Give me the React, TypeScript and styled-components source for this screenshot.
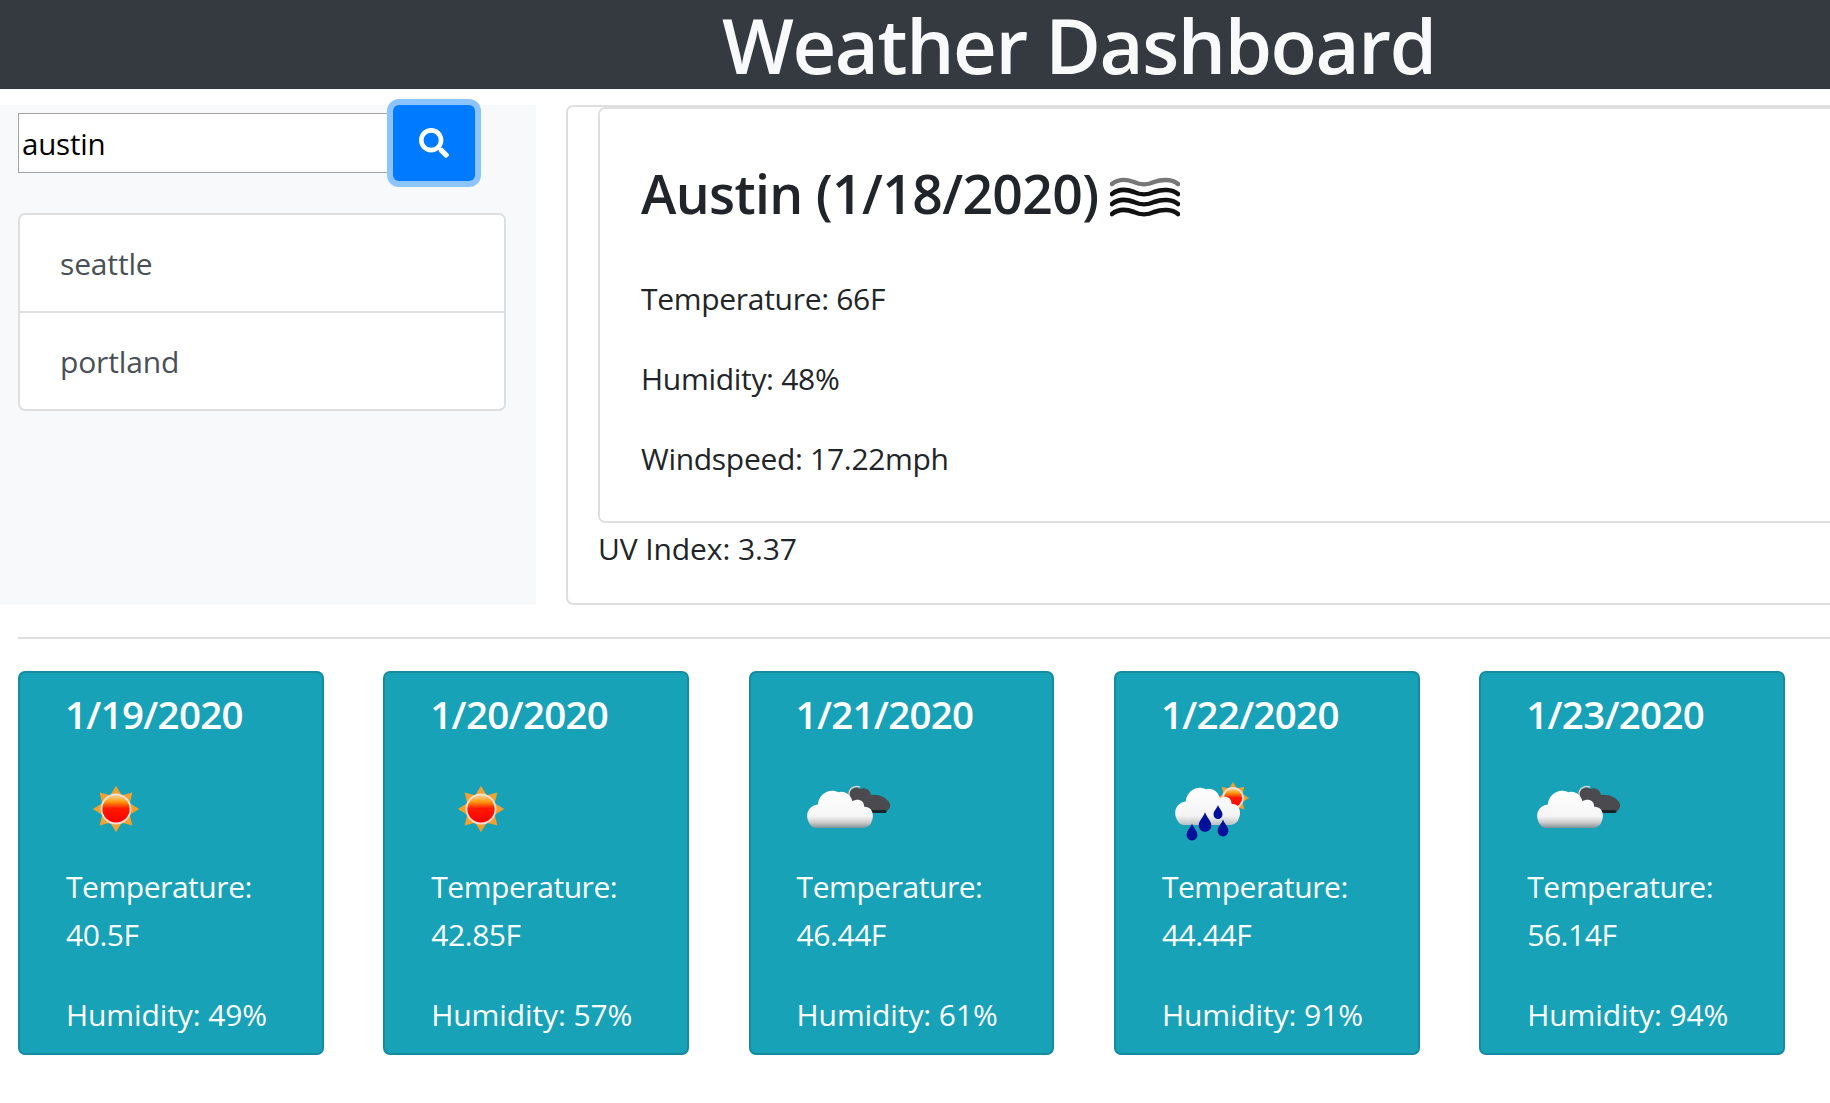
import React from "react";
import styled, { createGlobalStyle } from "styled-components";
import { FaSearch } from "react-icons/fa";

const Global = createGlobalStyle`
  html, body { margin: 0; padding: 0; background: #fff; overflow: hidden; }
  body { font-family: "Open Sans", "Noto Sans", "Liberation Sans", sans-serif; color: #212529; width: 1830px; height: 1103px; }
  * { box-sizing: border-box; }
`;

const Header = styled.header`
  height: 89px; background: #343a40; padding-left: 722px;
`;
const Title = styled.h1`
  margin: 0; font-size: 76px; line-height: 89px; font-weight: 600; color: #f8f9fa; letter-spacing: -1.4px; white-space: nowrap;
`;
const TopRow = styled.div`
  display: flex; margin-top: 16px; height: 500px;
`;
const Sidebar = styled.aside`
  width: 536px; flex: none; background: #f8f9fa; padding-left: 18px;
`;
const SearchRow = styled.form`
  display: flex; align-items: center; height: 76px;
`;
const SearchInput = styled.input`
  width: 375px; height: 60px; border: 1px solid #a3a3a3; background: #fff; padding: 1px 3px 0; margin: 0;
  font: 400 29.5px "Open Sans", sans-serif; color: #000; letter-spacing: -0.2px; outline: none; border-radius: 0;
`;
const SearchButton = styled.button`
  width: 82px; height: 76px; border: none; border-radius: 6px; background: #007bff; color: #fff; padding: 0;
  display: flex; align-items: center; justify-content: center; box-shadow: 0 0 0 6px #8cc4ff; font-size: 30px;
`;
const CityList = styled.ul`
  list-style: none; margin: 32px 0 0; padding: 0; width: 488px; border: 2px solid #dfdfdf; border-radius: 7px; background: #fff;
`;
const CityItem = styled.li`
  height: 96px; padding-left: 40px; display: flex; align-items: center; font-size: 30px; color: #495057; letter-spacing: -0.15px;
  & + & { border-top: 2px solid #dfdfdf; height: 98px; }
`;
const Main = styled.main`
  margin-left: 30px; flex: none; width: 1400px; height: 500px; border: 2px solid #dfdfdf; border-radius: 7px; padding-left: 30px;
`;
const CurrentCard = styled.section`
  height: 416px; border: 2px solid #dfdfdf; border-radius: 7px; padding: 54px 0 0 41px; display: flex; flex-direction: column; gap: 40px;
`;
const CityHeading = styled.h2`
  margin: 0 0 16px; height: 60px; display: flex; align-items: center; gap: 12px; font-size: 53.5px; font-weight: 600; letter-spacing: -0.65px; color: #212529; white-space: nowrap;
`;
const Detail = styled.p`
  margin: 0; height: 40px; line-height: 40px; font-size: 30px; letter-spacing: -0.3px;
`;
const UvLine = styled.div`
  height: 52px; line-height: 52px; font-size: 30px; letter-spacing: -0.1px;
`;
const Rule = styled.hr`
  margin: 32px 0 0 18px; border: none; height: 2px; background: #dedede;
`;
const Forecast = styled.div`
  display: flex; gap: 59.5px; margin: 32px 0 0 18px;
`;
const DayCard = styled.article`
  width: 305.8px; height: 384px; background: #17a2b8; border: 2px solid #148b9e; border-radius: 7px; color: #fff; padding: 16px 0 0 46px; flex: none;
`;
const DayDate = styled.h5`
  margin: 0 0 0 -1px; height: 50px; line-height: 50px; font-size: 38.5px; font-weight: 600; letter-spacing: -0.7px;
`;
const IconSlot = styled.div`
  width: 100px; height: 100px; margin-top: 19px;
`;
const Temp = styled.p`
  margin: 5px 0 0; font-size: 30px; line-height: 48px; letter-spacing: -0.45px; width: 240px;
`;
const Hum = styled.p`
  margin: 32px 0 0; font-size: 30px; line-height: 48px; letter-spacing: -0.1px; white-space: nowrap;
`;
const SoftSvg = styled.svg`
  display: block; filter: blur(0.7px);
`;
const WaveSvg = styled.svg`
  flex: none; margin-top: 7px; filter: blur(0.7px);
`;

const wave = (y: number) =>
  `M2 ${y + 2} C8 ${y - 3} 16 ${y - 3} 24 ${y} C30 ${y + 3} 38 ${y + 3} 44 ${y} C52 ${y - 3} 62 ${y - 3} 68 ${y + 2}`;

const Waves = () => (
  <WaveSvg width="70" height="40" viewBox="0 0 70 40" fill="none" strokeLinecap="round">
    <path d={wave(5)} stroke="#777" strokeWidth="4.4" />
    <path d={wave(15)} stroke="#111" strokeWidth="4.6" />
    <path d={wave(25)} stroke="#111" strokeWidth="4.6" />
    <path d={wave(35)} stroke="#111" strokeWidth="4.6" />
  </WaveSvg>
);

const SunGlyph = ({ id, cx, cy, r }: { id: string; cx: number; cy: number; r: number }) => {
  const pts: string[] = [];
  for (let i = 0; i < 16; i++) {
    const a = (Math.PI * 2 * i) / 16 - Math.PI / 2;
    const rad = i % 2 === 0 ? r * 1.6 : r * 1.02;
    pts.push(`${(cx + rad * Math.cos(a)).toFixed(1)},${(cy + rad * Math.sin(a)).toFixed(1)}`);
  }
  return (
    <>
      <defs>
        <linearGradient id={id} x1="0" y1="0" x2="0" y2="1">
          <stop offset="0" stopColor="#ffd9a0" />
          <stop offset="0.25" stopColor="#ff9a10" />
          <stop offset="0.48" stopColor="#ff1a00" />
          <stop offset="1" stopColor="#f80000" />
        </linearGradient>
      </defs>
      <polygon points={pts.join(" ")} fill="#f2a12e" />
      <circle cx={cx} cy={cy} r={r} fill={`url(#${id})`} stroke="#f9dfd2" strokeWidth="1.8" />
    </>
  );
};

const Sun = ({ id }: { id: string }) => (
  <SoftSvg width="100" height="100" viewBox="0 0 100 100">
    <SunGlyph id={id} cx={50} cy={51} r={14.5} />
  </SoftSvg>
);

const CLOUD = "M8 58 C2 50 6 41 15 40 C16 30 26 25 34 29 C39 27 46 31 47 37 C52 34 58 36 58 42 C66 42 68 50 64 57 C62 60 58 61 54 61 L14 61 C12 61 9 60 8 58 Z";

const Cloud = ({ id }: { id: string }) => (
  <SoftSvg width="100" height="100" viewBox="0 0 100 100">
    <defs>
      <linearGradient id={id} x1="0" y1="0" x2="0" y2="1">
        <stop offset="0" stopColor="#ffffff" />
        <stop offset="0.68" stopColor="#f6f6f6" />
        <stop offset="0.86" stopColor="#c9c9c9" />
        <stop offset="1" stopColor="#7d8f96" />
      </linearGradient>
    </defs>
    <path d="M51 37 C51 30 58 27 63 31 C68 29 73 32 74 37 C81 36 90 39 93 46 C94 52 88 55 84 55 L62 55 Z" fill="#4b4b4f" />
    <path d="M52 38 C51 31 57 27 63 29" fill="none" stroke="#c9d3d6" strokeWidth="1.6" />
    <path d="M68 53.5 L88 53.5" stroke="#16242b" strokeWidth="3" strokeLinecap="round" />
    <path d={CLOUD} fill={`url(#${id})`} transform="translate(4.6 1.8) scale(1.08 1.12)" />
  </SoftSvg>
);

const DROP = "M0 -7 C1.5 -3 4.5 -1 4.5 2.5 C4.5 5 2.5 7 0 7 C-2.5 7 -4.5 5 -4.5 2.5 C-4.5 -1 -1.5 -3 0 -7 Z";

const RainSun = ({ id }: { id: string }) => (
  <SoftSvg width="100" height="100" viewBox="0 0 100 100">
    <SunGlyph id={`${id}s`} cx={71} cy={40} r={10} />
    <defs>
      <linearGradient id={id} x1="0" y1="0" x2="0" y2="1">
        <stop offset="0" stopColor="#ffffff" />
        <stop offset="0.75" stopColor="#f4f4f4" />
        <stop offset="1" stopColor="#b8bfc2" />
      </linearGradient>
    </defs>
    <path d={CLOUD} fill={`url(#${id})`} transform="translate(7.7 -1.2) scale(1.066 1.12)" />
    <g fill="#00109a">
      <path d={DROP} transform="translate(43 64) scale(1.4)" />
      <path d={DROP} transform="translate(56 54) scale(1)" />
      <path d={DROP} transform="translate(30 74) scale(1.2)" />
      <path d={DROP} transform="translate(61 70) scale(1.2)" />
    </g>
  </SoftSvg>
);

const days = [
  { date: "1/19/2020", temp: "40.5F", hum: "49%", kind: "sun" },
  { date: "1/20/2020", temp: "42.85F", hum: "57%", kind: "sun" },
  { date: "1/21/2020", temp: "46.44F", hum: "61%", kind: "cloud" },
  { date: "1/22/2020", temp: "44.44F", hum: "91%", kind: "rain" },
  { date: "1/23/2020", temp: "56.14F", hum: "94%", kind: "cloud" },
];

export default function App() {
  return (
    <>
      <Global />
      <Header>
        <Title>Weather Dashboard</Title>
      </Header>
      <TopRow>
        <Sidebar>
          <SearchRow onSubmit={(e) => e.preventDefault()}>
            <SearchInput defaultValue="austin" />
            <SearchButton type="button" aria-label="Search">
              <FaSearch />
            </SearchButton>
          </SearchRow>
          <CityList>
            <CityItem>seattle</CityItem>
            <CityItem>portland</CityItem>
          </CityList>
        </Sidebar>
        <Main>
          <CurrentCard>
            <CityHeading>
              Austin (1/18/2020)
              <Waves />
            </CityHeading>
            <Detail>Temperature: 66F</Detail>
            <Detail>Humidity: 48%</Detail>
            <Detail>Windspeed: 17.22mph</Detail>
          </CurrentCard>
          <UvLine>UV Index: 3.37</UvLine>
        </Main>
      </TopRow>
      <Rule />
      <Forecast>
        {days.map((d, i) => (
          <DayCard key={d.date}>
            <DayDate>{d.date}</DayDate>
            <IconSlot>
              {d.kind === "sun" && <Sun id={`sun${i}`} />}
              {d.kind === "cloud" && <Cloud id={`cloud${i}`} />}
              {d.kind === "rain" && <RainSun id={`rain${i}`} />}
            </IconSlot>
            <Temp>
              Temperature:
              <br />
              {d.temp}
            </Temp>
            <Hum>Humidity: {d.hum}</Hum>
          </DayCard>
        ))}
      </Forecast>
    </>
  );
}
